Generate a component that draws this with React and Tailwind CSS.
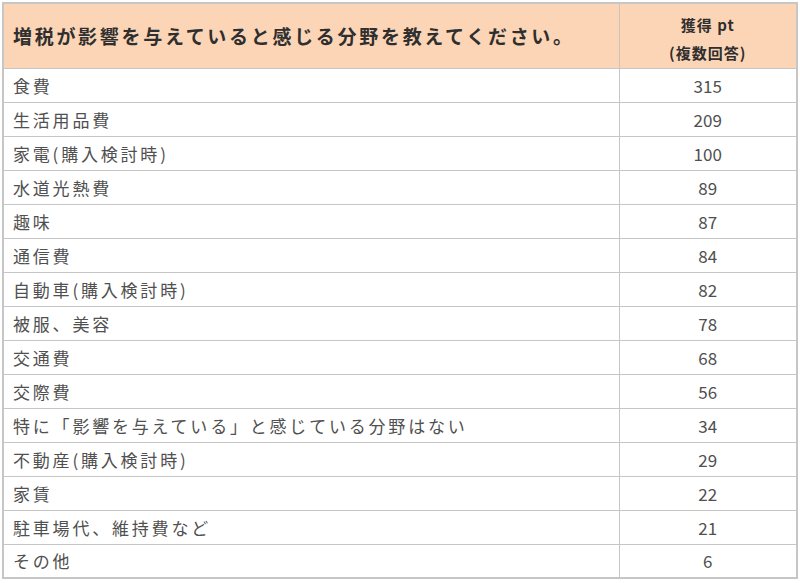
const rows = [
  ['食費', 315],
  ['生活用品費', 209],
  ['家電(購入検討時)', 100],
  ['水道光熱費', 89],
  ['趣味', 87],
  ['通信費', 84],
  ['自動車(購入検討時)', 82],
  ['被服、美容', 78],
  ['交通費', 68],
  ['交際費', 56],
  ['特に「影響を与えている」と感じている分野はない', 34],
  ['不動産(購入検討時)', 29],
  ['家賃', 22],
  ['駐車場代、維持費など', 21],
  ['その他', 6],
];

export default function App() {
  return (
    <div
      className="w-[800px] h-[583px] bg-white pt-[2px] pl-[2px]"
      style={{ fontFamily: '"Noto Sans CJK JP", "Noto Sans", sans-serif' }}
    >
      <table className="w-[796px] border-collapse border-2 border-[#c6c6c6] table-fixed">
        <thead>
          <tr className="bg-[#fcd5b6] h-[65px]">
            <th className="w-[616px] border border-[#c6c6c6] text-left pl-[9px] text-[19px] font-bold text-[#2f2f2f] tracking-[2.7px]">
              増税が影響を与えていると感じる分野を教えてください。
            </th>
            <th className="border border-[#c6c6c6] text-center pt-[7px] pb-0 text-[15px] font-bold text-[#2f2f2f] leading-[28px] tracking-[1px]">
              <div>獲得 pt</div>
              <div>(複数回答)</div>
            </th>
          </tr>
        </thead>
        <tbody>
          {rows.map(([label, pt]) => (
            <tr key={label} className="h-[34px]">
              <td className="border border-[#c6c6c6] pl-[9px] text-[17px] text-[#505050] tracking-[2.8px] leading-none">
                {label}
              </td>
              <td className="border border-[#c6c6c6] text-center text-[17px] text-[#505050] leading-none">
                {pt}
              </td>
            </tr>
          ))}
        </tbody>
      </table>
    </div>
  );
}
